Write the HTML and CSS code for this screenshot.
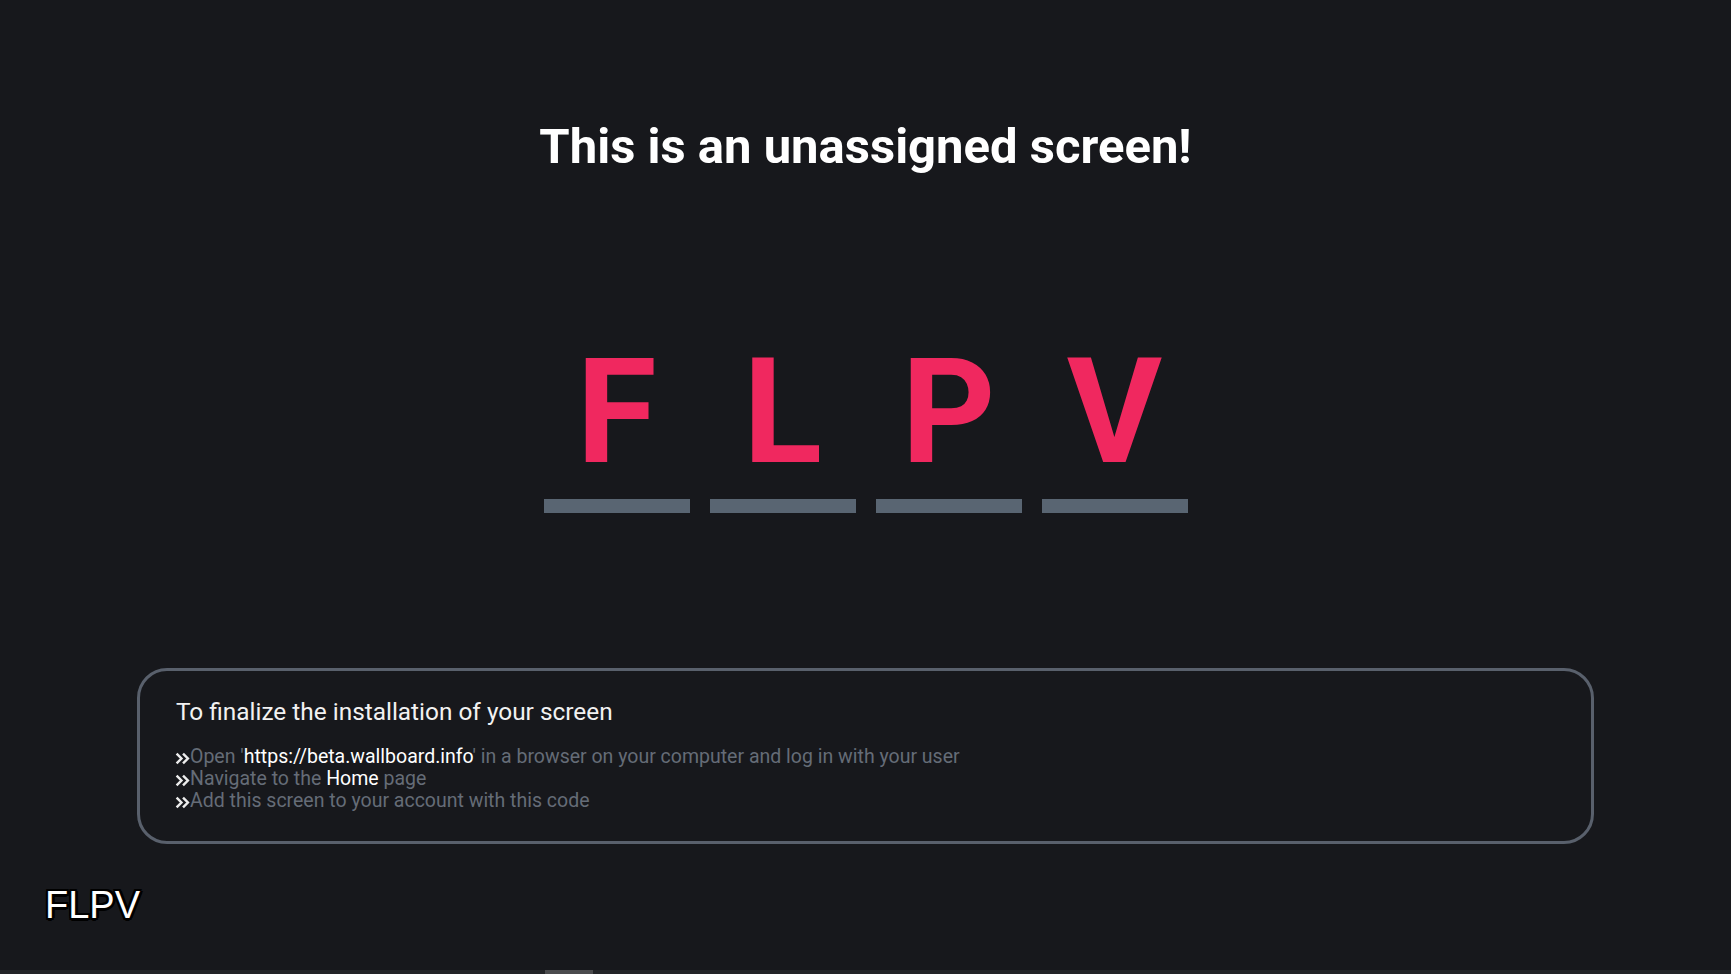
FILE: index.html
```html
<!DOCTYPE html>
<html lang="en">
<head>
    <meta charset="UTF-8">
    <meta name="viewport" content="width=device-width, initial-scale=1.0">
    <title>Unassigned screen</title>
    <link rel="stylesheet" href="styles.css">
</head>
<body>
    <div class="screen">
        <h1 class="title">This is an unassigned screen!</h1>

        <div class="code">
            <div class="code-cell"><span class="code-letter">F</span><span class="code-bar"></span></div>
            <div class="code-cell"><span class="code-letter">L</span><span class="code-bar"></span></div>
            <div class="code-cell"><span class="code-letter">P</span><span class="code-bar"></span></div>
            <div class="code-cell"><span class="code-letter">V</span><span class="code-bar"></span></div>
        </div>

        <div class="info">
            <p class="info-title">To finalize the installation of your screen</p>
            <ul class="steps">
                <li>
                    <svg class="chevron" viewBox="0 0 14 12"><path d="M1.5 1.5 L6 6 L1.5 10.5 M7.5 1.5 L12 6 L7.5 10.5"/></svg>Open '<span class="hl">https://beta.wallboard.info</span>' in a browser on your computer and log in with your user
                </li>
                <li>
                    <svg class="chevron" viewBox="0 0 14 12"><path d="M1.5 1.5 L6 6 L1.5 10.5 M7.5 1.5 L12 6 L7.5 10.5"/></svg>Navigate to the <span class="hl">Home</span> page
                </li>
                <li>
                    <svg class="chevron" viewBox="0 0 14 12"><path d="M1.5 1.5 L6 6 L1.5 10.5 M7.5 1.5 L12 6 L7.5 10.5"/></svg>Add this screen to your account with this code
                </li>
            </ul>
        </div>

        <div class="screen-id">FLPV</div>
    </div>

    <!-- bottom scrollbar strip -->
    <div class="scrollbar"><span class="scrollbar-thumb"></span></div>
</body>
</html>
```

FILE: styles.css
```css
html, body {
    height: 100%;
}
body {
    margin: 0;
    background: #17181c;
    color: #f4f4f4;
    font-family: Roboto, "Noto Sans", sans-serif;
    display: flex;
    flex-direction: column;
    overflow: hidden;
}
.screen {
    flex: 1;
    display: flex;
    flex-direction: column;
    padding-top: 117px;
}
.title {
    margin: 0;
    text-align: center;
    font-size: 49px;
    line-height: 60px;
    font-weight: 700;
    color: #ffffff;
}
.code {
    display: flex;
    justify-content: center;
    gap: 20px;
    margin-top: 163px;
}
.code-cell {
    width: 146px;
    display: flex;
    flex-direction: column;
    align-items: center;
}
.code-letter {
    font-size: 146px;
    line-height: 146px;
    font-weight: 700;
    color: #f0285f;
}
.code-bar {
    display: block;
    width: 100%;
    height: 14px;
    margin-top: 13px;
    background: #596572;
}
.info {
    margin: 155px 137px 0;
    border: 3px solid #59606c;
    border-radius: 30px;
    padding: 27px 36px 29px;
}
.info-title {
    margin: 0;
    font-size: 24.4px;
    line-height: 28px;
    color: #f2f2f2;
}
.steps {
    list-style: none;
    margin: 20px 0 0 -1px;
    padding: 0;
    font-size: 19.5px;
    line-height: 22px;
    color: #656c77;
}
.chevron {
    width: 15px;
    height: 13px;
    vertical-align: -2px;
    fill: none;
    stroke: #ececec;
    stroke-width: 2.3;
}
.hl {
    color: #ffffff;
}
.screen-id {
    margin: 39px 0 0 45px;
    font-family: "Liberation Sans", Arial, sans-serif;
    font-size: 38px;
    line-height: 44px;
    color: #ffffff;
    text-shadow: -2px -2px 0 #000, 2px -2px 0 #000, -2px 2px 0 #000, 2px 2px 0 #000, 0 3px 0 #000, 0 -2px 0 #000, 3px 0 0 #000, -2px 0 0 #000;
}
.scrollbar {
    height: 4px;
    background: #232427;
    position: relative;
}
.scrollbar-thumb {
    position: absolute;
    left: 545px;
    top: 0;
    width: 48px;
    height: 4px;
    background: #4b4b4d;
}
```
